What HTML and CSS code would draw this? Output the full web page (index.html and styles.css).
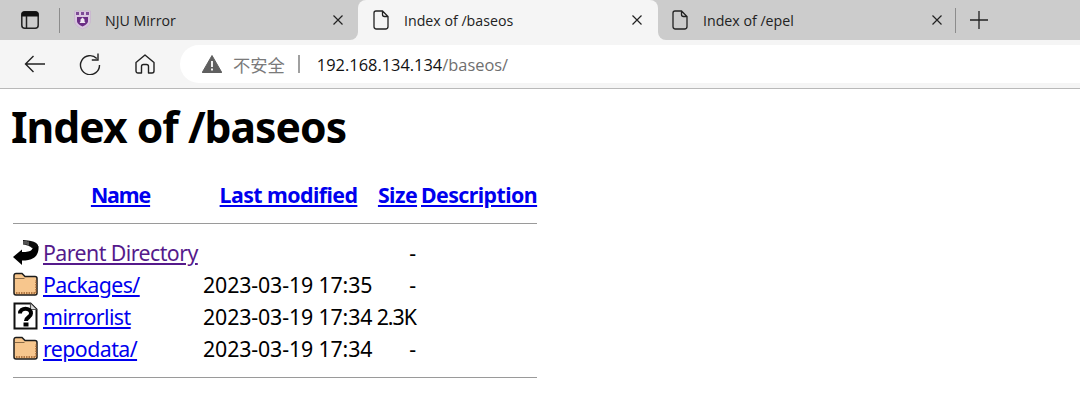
FILE: index.html
```html
<!DOCTYPE html>
<html lang="zh">
<head>
<meta charset="utf-8">
<title>Index of /baseos</title>
<link rel="stylesheet" href="styles.css">
</head>
<body>
<header class="chrome">
  <div class="tabstrip">
    <div class="tabstrip-start">
      <svg class="ico-tabs" width="18" height="18" viewBox="0 0 18 18"><rect x="0.800" y="0.800" width="16.400" height="16.400" rx="3" fill="none" stroke="#222" stroke-width="1.500"/><path d="M0.500 3.500a3 3 0 0 1 3-3h11a3 3 0 0 1 3 3V5.500H0.500z" fill="#111"/><path d="M5.500 5v12" stroke="#222" stroke-width="1.500"/></svg>
      <span class="vsep"></span>
    </div>
    <div class="tab tab-first">
      <svg class="favicon" width="17" height="20" viewBox="0 0 17 20"><path d="M0.500 1h16v9.500c0 4.500-4 7-8 8.500-4-1.500-8-4-8-8.500z" fill="#d9c6df" stroke="#c4afcb" stroke-width="0.600"/><path d="M3 7h11v4c0 2.500-3 4.500-5.500 5.500C6 15.500 3 13.500 3 11z" fill="#6a2c85"/><path d="M5.500 13l1-1.500V9.500l2-2 2 2v2l1 1.500z" fill="#efe6f2"/><path d="M2 2h3v3H2zM7 2h3v3H7zM12 2h3v3h-3z" fill="#7d4a96"/></svg>
      <span class="tab-title">NJU Mirror</span>
      <svg class="tab-close" width="10" height="10" viewBox="0 0 10 10"><path d="M0.500 0.500l9 9M9.500 0.500l-9 9" stroke="#222" stroke-width="1.200"/></svg>
    </div>
    <div class="tab tab-active">
      <svg class="page-ico" width="16" height="20" viewBox="0 0 16 20"><path d="M3 1h6.500L15 6.500V16.500a2.500 2.500 0 0 1-2.500 2.500h-9A2.500 2.500 0 0 1 1 16.500V3a2 2 0 0 1 2-2z M9.500 1v3.500a2 2 0 0 0 2 2H15" fill="none" stroke="#222" stroke-width="1.300"/></svg>
      <span class="tab-title">Index of /baseos</span>
      <svg class="tab-close" width="10" height="10" viewBox="0 0 10 10"><path d="M0.500 0.500l9 9M9.500 0.500l-9 9" stroke="#222" stroke-width="1.200"/></svg>
    </div>
    <div class="tab tab-last">
      <svg class="page-ico" width="16" height="20" viewBox="0 0 16 20"><path d="M3 1h6.500L15 6.500V16.500a2.500 2.500 0 0 1-2.500 2.500h-9A2.500 2.500 0 0 1 1 16.500V3a2 2 0 0 1 2-2z M9.500 1v3.500a2 2 0 0 0 2 2H15" fill="none" stroke="#222" stroke-width="1.300"/></svg>
      <span class="tab-title">Index of /epel</span>
      <svg class="tab-close" width="10" height="10" viewBox="0 0 10 10"><path d="M0.500 0.500l9 9M9.500 0.500l-9 9" stroke="#222" stroke-width="1.200"/></svg>
    </div>
    <div class="tabstrip-end">
      <span class="vsep"></span>
      <svg class="ico-plus" width="18" height="18" viewBox="0 0 18 18"><path d="M9 0v18M0 9h18" stroke="#222" stroke-width="1.300"/></svg>
    </div>
  </div>
  <div class="toolbar">
    <svg class="nav-ico back" width="22" height="18" viewBox="0 0 22 18"><path d="M21 9H1.500M9.500 1L1.500 9l8 8" fill="none" stroke="#222" stroke-width="1.400"/></svg>
    <svg class="nav-ico reload" width="22" height="22" viewBox="0 0 22 22"><path d="M17.800 5.500A9.500 9.500 0 1 0 20.500 12" fill="none" stroke="#222" stroke-width="1.400"/><path d="M19 0.500V7H12.800" fill="none" stroke="#222" stroke-width="1.400"/></svg>
    <svg class="nav-ico home" width="20" height="20" viewBox="0 0 20 20"><path d="M1 8.500L10 1l9 7.500V17a2 2 0 0 1-2 2h-3.500v-6.500a2 2 0 0 0-2-2h-3a2 2 0 0 0-2 2V19H3a2 2 0 0 1-2-2z" fill="none" stroke="#222" stroke-width="1.400" stroke-linejoin="round"/></svg>
    <div class="omnibox">
      <svg class="warn" width="20" height="18" viewBox="0 0 20 18"><path d="M10 0.500L19.800 17.500H0.200z" fill="#5f5f5f" stroke="#5f5f5f" stroke-linejoin="round"/><path d="M10 6v6M10 13.500v2" stroke="#fff" stroke-width="1.800"/></svg>
      <span class="insecure">不安全</span>
      <span class="omni-sep"></span>
      <span class="url"><span class="host">192.168.134.134</span><span class="path">/baseos/</span></span>
    </div>
  </div>
</header>
<main class="page">
  <h1>Index of /baseos</h1>
  <table class="listing">
    <tr><th class="c-ico"></th><th class="c-name"><a class="name-link" href="#">Name</a></th><th class="c-date"><a href="#">Last modified</a></th><th class="c-size"><a href="#">Size</a></th><th class="c-desc"><a href="#">Description</a></th></tr>
    <tr><th colspan="5" class="rule-cell"><hr></th></tr>
    <tr>
      <td class="c-ico"><svg class="file-ico" width="26" height="28" viewBox="0 0 26 28"><path d="M0 19l9-7.500v2.500c5 0 8-.5 9.500-2 1-1 1.500-2 1-3.500l6-.5c.5 5-1 9.500-5 12-3 2-7 2.500-11.500 2.500V27z" fill="#000"/><path d="M10 2l5 .5c4 .5 8 1.500 10 4.500v2l-6 1c-2-2-5-3-9-3.500z" fill="#0c0c0c"/><path d="M11 3v3.500M13 3v3.500M15 3.500v4" stroke="#9a9a9a" stroke-width="1"/></svg></td>
      <td><a class="visited" href="#">Parent Directory</a></td><td></td><td class="size">-</td><td></td>
    </tr>
    <tr>
      <td class="c-ico"><svg class="file-ico" width="26" height="28" viewBox="0 0 26 28"><path d="M1 5.500a2 2 0 0 1 2-2h6l3 3h10a2 2 0 0 1 2 2V23a2 2 0 0 1-2 2H3a2 2 0 0 1-2-2z" fill="#f7c68d" stroke="#1c1c1c" stroke-width="1.500"/><path d="M2 8.500h9.500" stroke="#8a6a45" stroke-width="1"/><path d="M3 23h20V10" fill="none" stroke="#9c5f2b" stroke-width="1.300" stroke-dasharray="1.500 1"/></svg></td>
      <td><a href="#">Packages/</a></td><td>2023-03-19 17:35</td><td class="size">-</td><td></td>
    </tr>
    <tr>
      <td class="c-ico"><svg class="file-ico" width="26" height="28" viewBox="0 0 26 28"><path d="M1.500 1.500h16l6 6v19h-22z" fill="#fff" stroke="#111" stroke-width="2"/><path d="M17.500 1.500v6h6" fill="#ddd" stroke="#555" stroke-width="1.200"/><path d="M7 11.500c0-6.500 11-6.500 11 0 0 4-5 3.500-5 7.500" fill="none" stroke="#000" stroke-width="4"/><path d="M10.500 20.500h5v4h-5z" fill="#000"/></svg></td>
      <td><a href="#">mirrorlist</a></td><td>2023-03-19 17:34</td><td class="size size-text">2.3K</td><td></td>
    </tr>
    <tr>
      <td class="c-ico"><svg class="file-ico" width="26" height="28" viewBox="0 0 26 28"><path d="M1 5.500a2 2 0 0 1 2-2h6l3 3h10a2 2 0 0 1 2 2V23a2 2 0 0 1-2 2H3a2 2 0 0 1-2-2z" fill="#f7c68d" stroke="#1c1c1c" stroke-width="1.500"/><path d="M2 8.500h9.500" stroke="#8a6a45" stroke-width="1"/><path d="M3 23h20V10" fill="none" stroke="#9c5f2b" stroke-width="1.300" stroke-dasharray="1.500 1"/></svg></td>
      <td><a href="#">repodata/</a></td><td>2023-03-19 17:34</td><td class="size">-</td><td></td>
    </tr>
    <tr><th colspan="5" class="rule-cell"><hr></th></tr>
  </table>
</main>
</body>
</html>
```
FILE: styles.css
```css
html, body { margin: 0; padding: 0; background: #fff; }
body { overflow: hidden; height: 405px; font-family: "Noto Sans", "Noto Sans CJK SC", sans-serif; color: #000; }

.chrome { font-family: "Open Sans", "Noto Sans CJK SC", sans-serif; }
.tabstrip { display: flex; align-items: center; height: 40px; background: linear-gradient(#cccccc 50%, #f5f5f5 50%); }
.tabstrip-start { display: flex; align-items: center; width: 67px; height: 40px; flex: none; background: #ccc; }
.tabstrip-end { display: flex; align-items: center; flex: 1; height: 40px; background: #ccc; }
.ico-tabs { margin-left: 21px; }
.vsep { width: 1px; height: 25px; background: #8c8c8c; flex: none; }
.tabstrip-start .vsep { margin-left: 20px; }
.tab { display: flex; align-items: center; height: 40px; flex: none; box-sizing: border-box; }
.tab-title { font-size: 14.2px; color: #222; flex: 1; white-space: nowrap; }
.tab-first { width: 291px; padding: 0 15px 0 7px; background: #ccc; border-bottom-right-radius: 8px; }
.tab-first .favicon { margin-right: 14px; }
.tab-active { width: 300px; padding: 0 16px 0 15px; background: #f5f5f5; border-radius: 8px 8px 0 0; }
.tab-active .page-ico { margin-right: 15px; }
.tab-last { width: 297px; padding: 0 13px 0 14px; background: #ccc; border-bottom-left-radius: 8px; }
.tab-last .page-ico { margin-right: 15px; }
.ico-plus { margin-left: 14px; }

.toolbar { display: flex; align-items: center; height: 48px; background: #f5f5f5; border-bottom: 1px solid #b9b9b9; }
.back { margin-left: 24px; }
.reload { margin-left: 33px; }
.home { margin-left: 34px; }
.omnibox { display: flex; align-items: center; flex: 1; height: 38px; margin-left: 25px; padding-left: 22px; background: #fff; border-radius: 19px 0 0 19px; }
.insecure { font-size: 17.300px; color: #7a7a7a; margin-left: 11px; font-family: "Noto Sans CJK SC", sans-serif; }
.omni-sep { width: 2px; height: 18px; background: #a0a0a0; margin: 0 17px 0 13px; }
.url { font-size: 16.400px; white-space: nowrap; }
.host { color: #111; }
.path { color: #6f6f6f; }

.page { padding: 11px 11px 0; }
h1 { font-size: 42.67px; line-height: 54px; font-weight: 700; letter-spacing: -1px; margin: 0 0 24px; }
.listing { border-collapse: separate; border-spacing: 2px; font-size: 21.33px; }
.listing th, .listing td { padding: 0; line-height: 30px; white-space: nowrap; vertical-align: top; letter-spacing: -0.13px; }
.c-ico { width: 28px; }
.listing .c-name { width: 155px; padding-right: 3px; }
.c-date { width: 171px; }
.c-size { width: 43px; }
.c-desc { width: 114px; }
.listing .size { text-align: right; padding-right: 3px; letter-spacing: 0; }
.listing .size-text { letter-spacing: -1px; }
.file-ico { display: block; }
.rule-cell hr { margin: 11px 0 12px; border: 0; height: 1px; background: #9a9a9a; }
a { color: #0000ee; text-decoration: underline; letter-spacing: -0.56px; }
a.name-link { letter-spacing: -1.1px; }
a.visited { color: #551a8b; }
```
